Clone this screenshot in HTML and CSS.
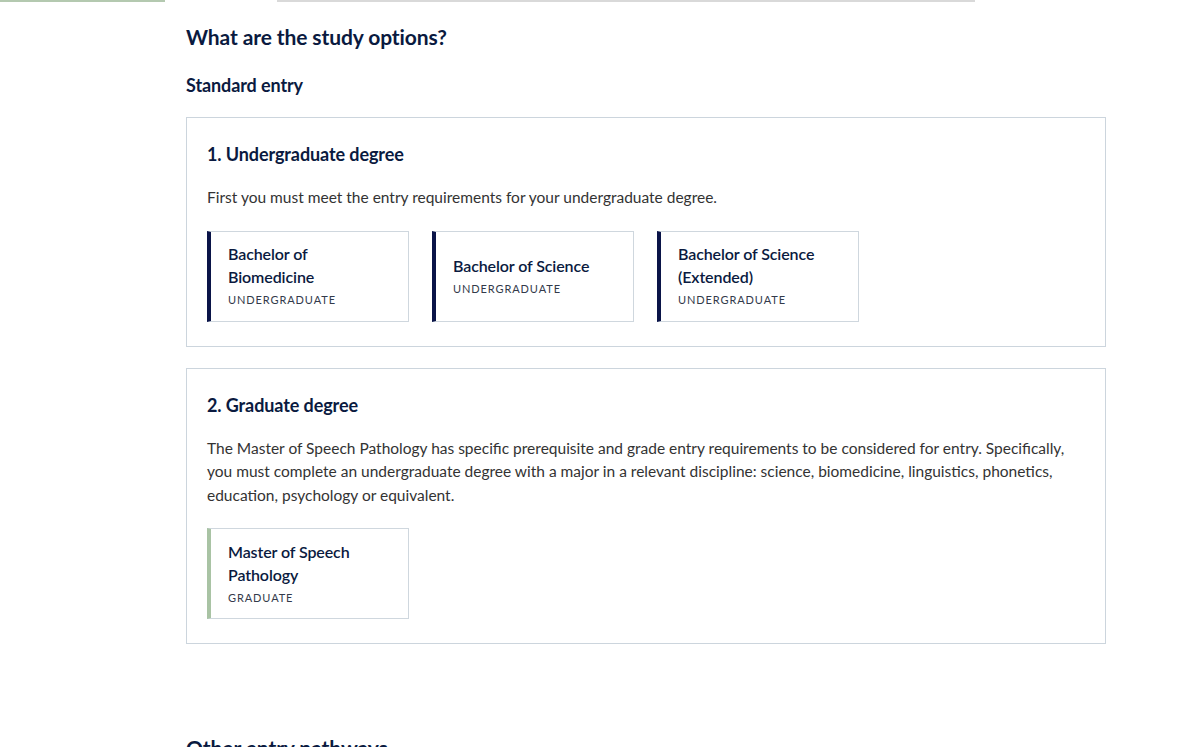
FILE: index.html
```html
<!DOCTYPE html>
<html lang="en">
<head>
<meta charset="utf-8">
<title>What are the study options?</title>
<link rel="stylesheet" href="styles.css">
</head>
<body>
<div class="tabbar">
  <span class="tab tab-active"></span>
  <span class="tab-gap1"></span>
  <span class="tab tab-rule"></span>
</div>
<main class="content">
  <h2 class="title">What are the study options?</h2>
  <h3 class="subtitle">Standard entry</h3>

  <section class="panel">
    <h4 class="panel-title">1. Undergraduate degree</h4>
    <p class="panel-text">First you must meet the entry requirements for your undergraduate degree.</p>
    <div class="cards">
      <a class="card card-ug" href="#">
        <span class="card-name">Bachelor of Biomedicine</span>
        <span class="card-level">UNDERGRADUATE</span>
      </a>
      <a class="card card-ug" href="#">
        <span class="card-name">Bachelor of Science</span>
        <span class="card-level">UNDERGRADUATE</span>
      </a>
      <a class="card card-ug" href="#">
        <span class="card-name">Bachelor of Science (Extended)</span>
        <span class="card-level">UNDERGRADUATE</span>
      </a>
    </div>
  </section>

  <section class="panel">
    <h4 class="panel-title">2. Graduate degree</h4>
    <p class="panel-text">The Master of Speech Pathology has specific prerequisite and grade entry requirements to be considered for entry. Specifically, you must complete an undergraduate degree with a major in a relevant discipline: science, biomedicine, linguistics, phonetics, education, psychology or equivalent.</p>
    <div class="cards">
      <a class="card card-gr" href="#">
        <span class="card-name">Master of Speech Pathology</span>
        <span class="card-level">GRADUATE</span>
      </a>
    </div>
  </section>

  <h3 class="subtitle subtitle-other">Other entry pathways</h3>
</main>
</body>
</html>
```

FILE: styles.css
```css
* { box-sizing: border-box; }

html, body {
  margin: 0;
  padding: 0;
  background: #ffffff;
}

body {
  font-family: "Lato", "Liberation Sans", sans-serif;
  color: #333333;
  width: 1200px;
  height: 747px;
  overflow: hidden;
}

.tabbar {
  display: flex;
  height: 2px;
}

.tab-active {
  width: 165px;
  background: #b4c9b0;
}

.tab-gap1 { width: 112px; }

.tab-rule {
  width: 698px;
  background: #d9d9d9;
}

.content {
  width: 920px;
  margin-left: 186px;
  padding-top: 21px;
}

.title {
  margin: 0;
  font-size: 21px;
  line-height: 28px;
  font-weight: 700;
  color: #0a1a40;
  letter-spacing: -0.1px;
}

.subtitle {
  margin: 22px 0 0;
  font-size: 18px;
  line-height: 24px;
  font-weight: 700;
  color: #0a1a40;
  letter-spacing: -0.1px;
}

.subtitle-other {
  margin-top: 92px;
  font-size: 21px;
}

.panel {
  border: 1px solid #ccd5dd;
  padding: 24px 20px 24px;
  margin-top: 20px;
}

.panel + .panel { margin-top: 21px; }

.panel-title {
  margin: 0;
  font-size: 18px;
  line-height: 24px;
  font-weight: 700;
  color: #0a1a40;
  letter-spacing: -0.1px;
}

.panel-text {
  margin: 20px 0 0;
  font-size: 15.5px;
  line-height: 23.5px;
  color: #333333;
  padding-right: 8px;
}

.cards {
  display: flex;
  gap: 23px;
  margin-top: 21px;
}

.card {
  width: 202px;
  height: 91px;
  border: 1px solid #cfd7de;
  border-left: 4px solid #0a1448;
  padding: 10px 30px 10px 17px;
  display: flex;
  flex-direction: column;
  justify-content: center;
  text-decoration: none;
}

.card-gr { border-left-color: #a9c3a4; }

.card-name {
  font-size: 16px;
  line-height: 23px;
  font-weight: 600;
  color: #0a1a40;
  letter-spacing: -0.1px;
}

.card-level {
  margin-top: 2px;
  font-size: 11px;
  line-height: 20px;
  letter-spacing: 0.9px;
  color: #333a4a;
}
```
